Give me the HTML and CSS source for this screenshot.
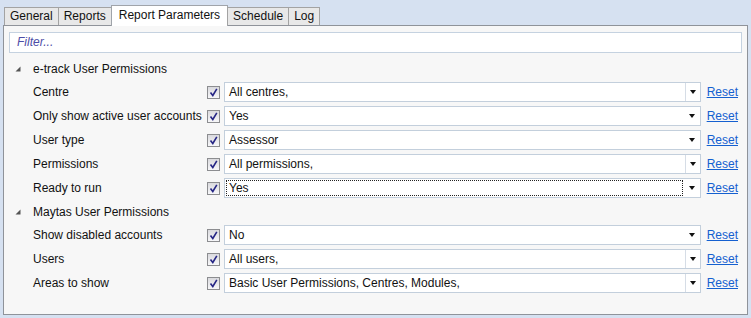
FILE: index.html
```html
<!DOCTYPE html>
<html>
<head>
<meta charset="utf-8">
<link rel="stylesheet" href="styles.css">
</head>
<body>
<div class="tabs">
  <div class="tab">General</div>
  <div class="tab">Reports</div>
  <div class="tab active">Report Parameters</div>
  <div class="tab">Schedule</div>
  <div class="tab">Log</div>
</div>
<div class="panel">
  <div class="filter">Filter...</div>
  <div class="tree">
    <div class="group"><svg class="tri" width="6" height="6" viewBox="0 0 6 6"><polygon points="5.5,0.5 5.5,5.5 0.5,5.5" fill="#555"/></svg><span>e-track User Permissions</span></div>
    <div class="row"><span class="label">Centre</span><span class="cb"><svg width="11" height="11" viewBox="0 0 11 11"><path d="M2.5 5.5 L4.8 8.5 L8.8 1.8" fill="none" stroke="#262685" stroke-width="1.6"/></svg></span><div class="select multi"><span class="val">All centres,</span><span class="arrow"></span></div><a class="reset" href="#">Reset</a></div>
    <div class="row"><span class="label">Only show active user accounts</span><span class="cb"><svg width="11" height="11" viewBox="0 0 11 11"><path d="M2.5 5.5 L4.8 8.5 L8.8 1.8" fill="none" stroke="#262685" stroke-width="1.6"/></svg></span><div class="select"><span class="val">Yes</span><span class="arrow"></span></div><a class="reset" href="#">Reset</a></div>
    <div class="row"><span class="label">User type</span><span class="cb"><svg width="11" height="11" viewBox="0 0 11 11"><path d="M2.5 5.5 L4.8 8.5 L8.8 1.8" fill="none" stroke="#262685" stroke-width="1.6"/></svg></span><div class="select"><span class="val">Assessor</span><span class="arrow"></span></div><a class="reset" href="#">Reset</a></div>
    <div class="row"><span class="label">Permissions</span><span class="cb"><svg width="11" height="11" viewBox="0 0 11 11"><path d="M2.5 5.5 L4.8 8.5 L8.8 1.8" fill="none" stroke="#262685" stroke-width="1.6"/></svg></span><div class="select multi"><span class="val">All permissions,</span><span class="arrow"></span></div><a class="reset" href="#">Reset</a></div>
    <div class="row"><span class="label">Ready to run</span><span class="cb"><svg width="11" height="11" viewBox="0 0 11 11"><path d="M2.5 5.5 L4.8 8.5 L8.8 1.8" fill="none" stroke="#262685" stroke-width="1.6"/></svg></span><div class="select"><span class="val focus">Yes</span><span class="arrow"></span></div><a class="reset" href="#">Reset</a></div>
    <div class="group"><svg class="tri" width="6" height="6" viewBox="0 0 6 6"><polygon points="5.5,0.5 5.5,5.5 0.5,5.5" fill="#555"/></svg><span>Maytas User Permissions</span></div>
    <div class="row"><span class="label">Show disabled accounts</span><span class="cb"><svg width="11" height="11" viewBox="0 0 11 11"><path d="M2.5 5.5 L4.8 8.5 L8.8 1.8" fill="none" stroke="#262685" stroke-width="1.6"/></svg></span><div class="select"><span class="val">No</span><span class="arrow"></span></div><a class="reset" href="#">Reset</a></div>
    <div class="row"><span class="label">Users</span><span class="cb"><svg width="11" height="11" viewBox="0 0 11 11"><path d="M2.5 5.5 L4.8 8.5 L8.8 1.8" fill="none" stroke="#262685" stroke-width="1.6"/></svg></span><div class="select multi"><span class="val">All users,</span><span class="arrow"></span></div><a class="reset" href="#">Reset</a></div>
    <div class="row"><span class="label">Areas to show</span><span class="cb"><svg width="11" height="11" viewBox="0 0 11 11"><path d="M2.5 5.5 L4.8 8.5 L8.8 1.8" fill="none" stroke="#262685" stroke-width="1.6"/></svg></span><div class="select multi"><span class="val">Basic User Permissions, Centres, Modules,</span><span class="arrow"></span></div><a class="reset" href="#">Reset</a></div>
  </div>
</div>
</body>
</html>
```
FILE: styles.css
```css
html, body {
  margin: 0;
  padding: 0;
}
body {
  background: #d6e1f1;
  font-family: "Liberation Sans", Arial, sans-serif;
  font-size: 12px;
  color: #111;
  width: 751px;
  height: 318px;
  overflow: hidden;
}
.tabs {
  display: flex;
  align-items: flex-end;
  height: 25px;
  padding-left: 4px;
  position: relative;
  z-index: 1;
}
.tab {
  height: 17px;
  line-height: 17px;
  padding: 0 5px;
  background: #e8e8e8;
  border: 1px solid #a3a3a3;
  border-bottom: none;
  margin-right: -1px;
}
.tab.active {
  height: 20px;
  line-height: 19px;
  background: #fff;
  border-color: #a0a4aa;
  margin-bottom: -1px;
  padding: 0 7px;
}
.panel {
  margin: 0 3px;
  height: 282px;
  border: 1px solid #8f939a;
  background: #f7f7f7;
  padding: 6px 5px 0 5px;
}
.filter {
  height: 19px;
  line-height: 19px;
  border: 1px solid #c5d2e0;
  background: #fff;
  padding-left: 7px;
  font-style: italic;
  color: #4c4ca6;
}
.tree {
  margin-top: 4px;
}
.group {
  height: 23px;
  display: flex;
  align-items: center;
  padding-left: 6px;
}
.group .tri {
  margin-right: 12px;
}
.row {
  height: 24px;
  display: flex;
  align-items: center;
}
.label {
  width: 174px;
  padding-left: 24px;
  flex: none;
}
.cb {
  width: 11px;
  height: 11px;
  border: 1px solid #8c8d90;
  background: linear-gradient(#dadade, #f7f7f9);
  margin-right: 4px;
  flex: none;
  display: flex;
}
.select {
  flex: 1;
  height: 18px;
  border: 1px solid #c3cfdc;
  background: #fff;
  display: flex;
  align-items: center;
}
.val {
  flex: 1;
  padding-left: 4px;
  line-height: 14px;
}
.val.focus {
  margin-left: 2px;
  padding-left: 2px;
  outline: 1px dotted #222;
  margin-right: 3px;
}
.arrow {
  width: 15px;
  height: 18px;
  position: relative;
  flex: none;
}
.multi .arrow {
  border-left: 1px solid #d6dde6;
  width: 14px;
}
.arrow::after {
  content: "";
  position: absolute;
  left: 4px;
  top: 7px;
  border-left: 3.5px solid transparent;
  border-right: 3.5px solid transparent;
  border-top: 4px solid #111;
}
.reset {
  margin-left: 6px;
  margin-right: 4px;
  color: #1560d0;
  text-decoration: underline;
}
```
